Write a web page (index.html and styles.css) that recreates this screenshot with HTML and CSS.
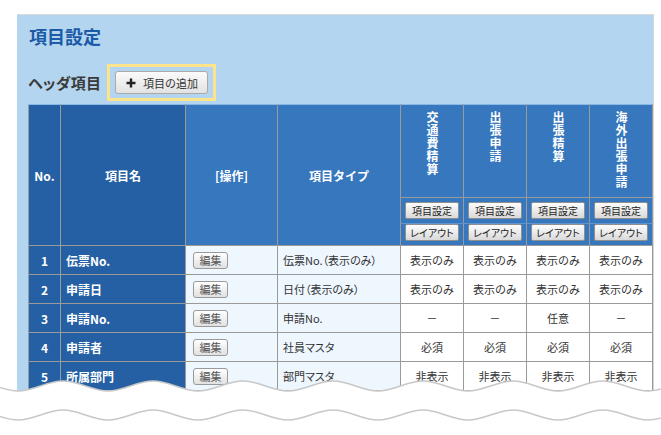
FILE: index.html
```html
<!DOCTYPE html>
<html lang="ja">
<head>
<meta charset="utf-8">
<title>項目設定</title>
<link rel="stylesheet" href="styles.css">
</head>
<body>
<div class="panel">
  <h1 class="title">項目設定</h1>
  <div class="head-row">
    <span class="head-label">ヘッダ項目</span>
    <div class="highlight">
      <button class="add-btn"><svg class="plus" viewBox="0 0 10 10" width="10" height="10"><path d="M5 0.5V9.5M0.5 5H9.5" stroke="#222" stroke-width="2.4"/></svg><span>項目の追加</span></button>
    </div>
  </div>
  <table class="grid">
    <colgroup>
      <col class="c-no"><col class="c-name"><col class="c-op"><col class="c-type">
      <col class="c-d"><col class="c-d"><col class="c-d"><col class="c-d"><col class="c-x">
    </colgroup>
    <thead>
      <tr class="h1">
        <th rowspan="3" class="dark">No.</th>
        <th rowspan="3" class="dark">項目名</th>
        <th rowspan="3">[操作]</th>
        <th rowspan="3">項目タイプ</th>
        <th class="vt"><span>交通費精算</span></th>
        <th class="vt"><span>出張申請</span></th>
        <th class="vt"><span>出張精算</span></th>
        <th class="vt"><span>海外出張申請</span></th>
        <th class="vt"></th>
      </tr>
      <tr class="h2">
        <th><button class="sm-btn">項目設定</button></th>
        <th><button class="sm-btn">項目設定</button></th>
        <th><button class="sm-btn">項目設定</button></th>
        <th><button class="sm-btn">項目設定</button></th>
        <th></th>
      </tr>
      <tr class="h3">
        <th><button class="sm-btn">レイアウト</button></th>
        <th><button class="sm-btn">レイアウト</button></th>
        <th><button class="sm-btn">レイアウト</button></th>
        <th><button class="sm-btn">レイアウト</button></th>
        <th></th>
      </tr>
    </thead>
    <tbody>
      <tr>
        <td class="no">1</td><td class="name">伝票No.</td>
        <td class="op"><button class="edit-btn">編集</button></td>
        <td class="type">伝票No.（表示のみ）</td>
        <td>表示のみ</td><td>表示のみ</td><td>表示のみ</td><td>表示のみ</td><td></td>
      </tr>
      <tr>
        <td class="no">2</td><td class="name">申請日</td>
        <td class="op"><button class="edit-btn">編集</button></td>
        <td class="type">日付（表示のみ）</td>
        <td>表示のみ</td><td>表示のみ</td><td>表示のみ</td><td>表示のみ</td><td></td>
      </tr>
      <tr>
        <td class="no">3</td><td class="name">申請No.</td>
        <td class="op"><button class="edit-btn">編集</button></td>
        <td class="type">申請No.</td>
        <td>－</td><td>－</td><td>任意</td><td>－</td><td></td>
      </tr>
      <tr>
        <td class="no">4</td><td class="name">申請者</td>
        <td class="op"><button class="edit-btn">編集</button></td>
        <td class="type">社員マスタ</td>
        <td>必須</td><td>必須</td><td>必須</td><td>必須</td><td></td>
      </tr>
      <tr>
        <td class="no">5</td><td class="name">所属部門</td>
        <td class="op"><button class="edit-btn">編集</button></td>
        <td class="type">部門マスタ</td>
        <td>非表示</td><td>非表示</td><td>非表示</td><td>非表示</td><td></td>
      </tr>
      <tr>
        <td class="no">6</td><td class="name"></td>
        <td class="op"></td><td class="type"></td>
        <td></td><td></td><td></td><td></td><td></td>
      </tr>
    </tbody>
  </table>
</div>
<svg class="tear" viewBox="0 0 661 65" width="661" height="65" aria-hidden="true">
  <defs>
    <filter id="sh" x="-5%" y="-50%" width="110%" height="200%">
      <feDropShadow dx="0" dy="2" stdDeviation="1.5" flood-color="#000" flood-opacity="0.22"/>
    </filter>
    <path id="wave" d="M-27,11 C-10.8,11 1.8,21 18,21 S46.8,11 63,11 S91.8,21 108,21 S136.8,11 153,11 S181.8,21 198,21 S226.8,11 243,11 S271.8,21 288,21 S316.8,11 333,11 S361.8,21 378,21 S406.8,11 423,11 S451.8,21 468,21 S496.8,11 513,11 S541.8,21 558,21 S586.8,11 603,11 S631.8,21 648,21 S676.8,11 693,11"/>
  </defs>
  <path filter="url(#sh)" fill="#fff" d="M-27,11 C-10.8,11 1.8,21 18,21 S46.8,11 63,11 S91.8,21 108,21 S136.8,11 153,11 S181.8,21 198,21 S226.8,11 243,11 S271.8,21 288,21 S316.8,11 333,11 S361.8,21 378,21 S406.8,11 423,11 S451.8,21 468,21 S496.8,11 513,11 S541.8,21 558,21 S586.8,11 603,11 S631.8,21 648,21 S676.8,11 693,11 L693,80 L-27,80 Z"/>
  <use href="#wave" fill="none" stroke="#c8c8c8" stroke-width="1.5"/>
  <use href="#wave" fill="none" stroke="#c8c8c8" stroke-width="1.5" transform="translate(0,29)"/>
</svg>
</body>
</html>
```

FILE: styles.css
```css
* { box-sizing: border-box; }

html, body {
  margin: 0;
  padding: 0;
  background: #ffffff;
}

body {
  position: relative;
  width: 661px;
  height: 435px;
  overflow: hidden;
  font-family: "Noto Sans CJK JP", "Noto Sans", sans-serif;
  color: #333;
}

.panel {
  margin: 14px 7px 0 17px;
  height: 430px;
  background: #b3d5ef;
  border-top: 1px solid #dadada;
  border-right: 1px solid #d6d6d6;
  padding: 9px 0 0 11px;
  overflow: hidden;
}

.title {
  margin: 0 0 0 1px;
  font-size: 18px;
  line-height: 24px;
  font-weight: bold;
  color: #1b5aa6;
}

.head-row {
  display: flex;
  align-items: center;
  margin-top: 17px;
  height: 35px;
}

.head-label {
  font-size: 15px;
  font-weight: bold;
  color: #3a3a3a;
  font-feature-settings: "palt";
  letter-spacing: 0.3px;
}

.highlight {
  margin-left: 6px;
  border: 3px solid #fde38a;
  padding: 4px 5px;
}

.add-btn {
  display: flex;
  align-items: center;
  justify-content: center;
  gap: 7px;
  width: 93px;
  height: 23px;
  padding: 0;
  border: 1px solid #a9a9a9;
  border-radius: 3px;
  background: linear-gradient(#fbfbfb, #e2e2e2);
  font-family: inherit;
  font-size: 11px;
  color: #333;
}

.plus { display: block; }

.grid {
  margin-top: 4px;
  border-collapse: collapse;
  table-layout: fixed;
  width: 684px;
  font-size: 12px;
}

.c-no { width: 32px; }
.c-name { width: 125px; }
.c-op { width: 92px; }
.c-type { width: 123px; }
.c-d { width: 63px; }
.c-x { width: 66px; }

.grid th,
.grid td {
  border: 1px solid #9a9a9a;
  padding: 0;
}

.grid th {
  background: #3677be;
  color: #fff;
  font-weight: bold;
  font-size: 12px;
  text-align: center;
  vertical-align: middle;
}

.grid th.dark { background: #2460a3; }

.grid thead tr:first-child th { border-top-color: #8ab8e4; }

.h1 th.vt {
  height: 93px;
  vertical-align: top;
  padding-top: 6px;
}

.vt span {
  display: inline-block;
  writing-mode: vertical-rl;
  text-orientation: upright;
  letter-spacing: 1px;
  line-height: 14px;
  font-size: 12px;
}

.h2 th {
  height: 26px;
  padding-top: 4px;
  vertical-align: top;
  border-bottom-color: #5f95cf;
}

.h3 th {
  height: 22px;
  vertical-align: top;
  padding-top: 0;
}

.sm-btn {
  display: block;
  margin: 0 auto;
  width: 54px;
  height: 17px;
  padding: 0;
  border: 1px solid #8f8f8f;
  border-radius: 2px;
  background: linear-gradient(#fdfdfd, #d9d9d9);
  font-family: inherit;
  font-size: 10px;
  line-height: 15px;
  color: #222;
  font-feature-settings: "palt";
}

.grid td {
  height: 29px;
  text-align: center;
  vertical-align: middle;
  background: #fff;
  color: #333;
  font-size: 11px;
}

.grid td.no {
  background: #2460a3;
  color: #fff;
  font-weight: bold;
  font-size: 12px;
}

.grid td.name {
  background: #2460a3;
  color: #fff;
  font-weight: bold;
  font-size: 12px;
  text-align: left;
  padding-left: 5px;
}

.grid td.op {
  background: #eef6fe;
  text-align: left;
  padding-left: 7px;
}

.grid td.type {
  background: #eef6fe;
  text-align: left;
  padding-left: 5px;
  font-feature-settings: "palt";
}

.edit-btn {
  display: block;
  width: 35px;
  height: 17px;
  padding: 0;
  border: 1px solid #9a9a9a;
  border-radius: 3px;
  background: linear-gradient(#ffffff, #e1e1e1);
  font-family: inherit;
  font-size: 11px;
  line-height: 15px;
  color: #555;
}

.tear {
  position: absolute;
  left: 0;
  top: 370px;
}
```
